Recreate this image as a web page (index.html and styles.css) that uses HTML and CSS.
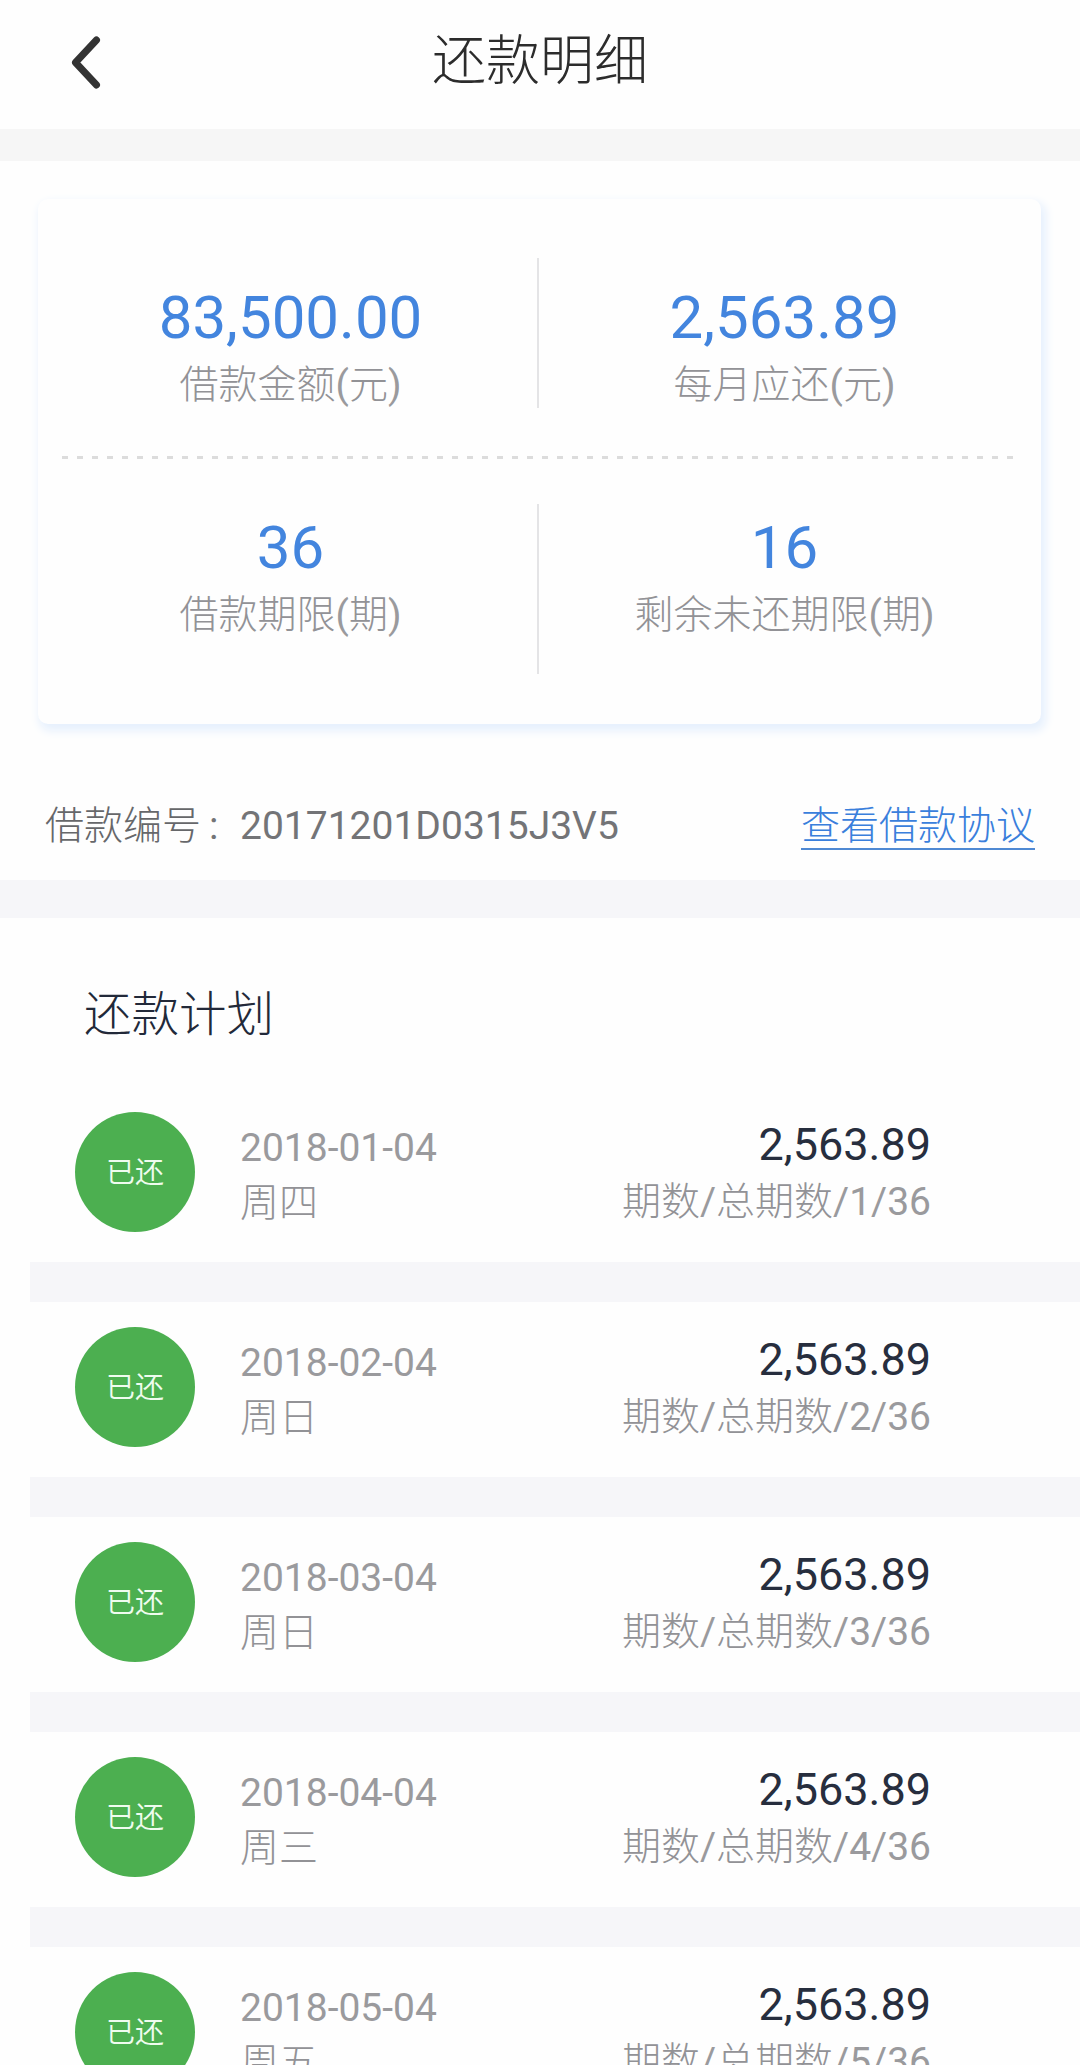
FILE: index.html
```html
<!DOCTYPE html>
<html lang="zh-CN">
<head>
<meta charset="utf-8">
<title>还款明细</title>
<link rel="stylesheet" href="styles.css">
</head>
<body>
<header class="topbar">
  <svg class="back" viewBox="0 0 30 54" aria-hidden="true"><path d="M25.5 4 4.5 26.5 25.5 49"/></svg>
  <h1 class="title">还款明细</h1>
</header>
<section class="summary">
  <div class="card">
    <div class="metrics metrics-top">
      <div class="metric"><div class="value">83,500.00</div><div class="label">借款金额<b>(</b>元<b>)</b></div></div>
      <div class="metric"><div class="value">2,563.89</div><div class="label">每月应还<b>(</b>元<b>)</b></div></div>
    </div>
    <div class="dashes"></div>
    <div class="metrics metrics-bottom">
      <div class="metric"><div class="value">36</div><div class="label">借款期限<b>(</b>期<b>)</b></div></div>
      <div class="metric"><div class="value">16</div><div class="label">剩余未还期限<b>(</b>期<b>)</b></div></div>
    </div>
  </div>
  <div class="loan">
    <div class="loan-no"><span>借款编号</span><b class="colon">:</b><b>20171201D0315J3V5</b></div>
    <a class="agreement">查看借款协议</a>
  </div>
</section>
<section class="plan">
  <h2 class="plan-title">还款计划</h2>
  <ul class="rows">
    <li class="row"><span class="status">已还</span><div class="when"><div><b>2018-01-04</b></div><div>周四</div></div><div class="due"><div class="amount">2,563.89</div><div>期数<b>/</b>总期数<b>/1/36</b></div></div></li>
    <li class="row"><span class="status">已还</span><div class="when"><div><b>2018-02-04</b></div><div>周日</div></div><div class="due"><div class="amount">2,563.89</div><div>期数<b>/</b>总期数<b>/2/36</b></div></div></li>
    <li class="row"><span class="status">已还</span><div class="when"><div><b>2018-03-04</b></div><div>周日</div></div><div class="due"><div class="amount">2,563.89</div><div>期数<b>/</b>总期数<b>/3/36</b></div></div></li>
    <li class="row"><span class="status">已还</span><div class="when"><div><b>2018-04-04</b></div><div>周三</div></div><div class="due"><div class="amount">2,563.89</div><div>期数<b>/</b>总期数<b>/4/36</b></div></div></li>
    <li class="row"><span class="status">已还</span><div class="when"><div><b>2018-05-04</b></div><div>周五</div></div><div class="due"><div class="amount">2,563.89</div><div>期数<b>/</b>总期数<b>/5/36</b></div></div></li>
  </ul>
</section>
</body>
</html>
```
FILE: styles.css
```css
* { box-sizing: border-box; }

body {
  margin: 0;
  height: 2065px;
  overflow: hidden;
  background: #fefefe;
  color: #929296;
  font-family: Roboto, "Noto Sans CJK SC", sans-serif;
  font-size: 39px;
  font-weight: 300;
}

h1, h2, ul { margin: 0; padding: 0; font-weight: 300; }

/* Chinese text is set light; figures and Latin signs are regular */
b, .value, .amount { font-weight: 400; }
b { color: #9a9a9d; }

.topbar {
  display: grid;
  grid-template-columns: 102px 1fr 102px;
  height: 129px;
}
.back {
  width: 30px;
  height: 54px;
  margin: 36px 0 0 71px;
  fill: none;
  stroke: #333;
  stroke-width: 7;
  stroke-linecap: round;
  stroke-linejoin: round;
}
.title {
  color: #2c2c2c;
  font-size: 54px;
  line-height: 123px;
  text-align: center;
}

.summary {
  height: 789px;
  padding: 38px 39px 0 38px;
  border-top: 32px solid #f6f6f6;
  border-bottom: 38px solid #f6f6f9;
}
.card {
  height: 525px;
  padding: 59px 11px 0 6px;
  border-radius: 10px;
  background: #fefefe;
  box-shadow: 3px 5px 10px 2px #e6f0fd;
}
.metrics {
  display: grid;
  grid-template-columns: 495px 491px;
  text-align: center;
}
.metrics-top { height: 150px; }
.metrics-top .metric { padding-top: 24px; }
.metrics-bottom { height: 170px; }
.metrics-bottom .metric { padding-top: 8px; }
.metric:first-child { border-right: 2px solid #e4e4e6; }
.value {
  color: #4385de;
  font-size: 60px;
  line-height: 71px;
}
.label {
  margin-top: 9px;
  line-height: 46px;
}
.dashes {
  height: 3px;
  margin: 48px 17px 45px 18px;
  background: repeating-linear-gradient(90deg, #dcdcdc 0 6px, transparent 6px 15px);
}

.loan {
  display: flex;
  justify-content: space-between;
  margin: 79px 6px 0 7px;
  line-height: 46px;
}
.loan-no { display: flex; color: #66676a; }
.loan-no b { color: #737477; }
.loan-no .colon { width: 39px; padding-left: 8px; }
.agreement {
  height: 47px;
  border-bottom: 2px solid #4f89d3;
  color: #3a7fdc;
}

.plan { padding-top: 69px; }
.plan-title {
  margin: 0 0 44px 84px;
  color: #222939;
  font-size: 47.5px;
  line-height: 56px;
}
.rows { margin-left: 30px; list-style: none; }
.row {
  display: flex;
  height: 215px;
  padding: 25px 149px 0 45px;
  border-bottom: 40px solid #f6f6f9;
  line-height: 54px;
}
.status {
  width: 120px;
  height: 120px;
  border-radius: 50%;
  background: #4caf50;
  color: #effcef;
  font-size: 29px;
  font-weight: 350;
  line-height: 122px;
  text-align: center;
}
.when { margin: 9px 0 0 45px; }
.due { margin: 4px 0 0 auto; text-align: right; }
.due .amount {
  color: #272e3e;
  font-size: 45px;
  line-height: 58px;
}
.when div:last-child, .due div:last-child { line-height: 56px; }
```
